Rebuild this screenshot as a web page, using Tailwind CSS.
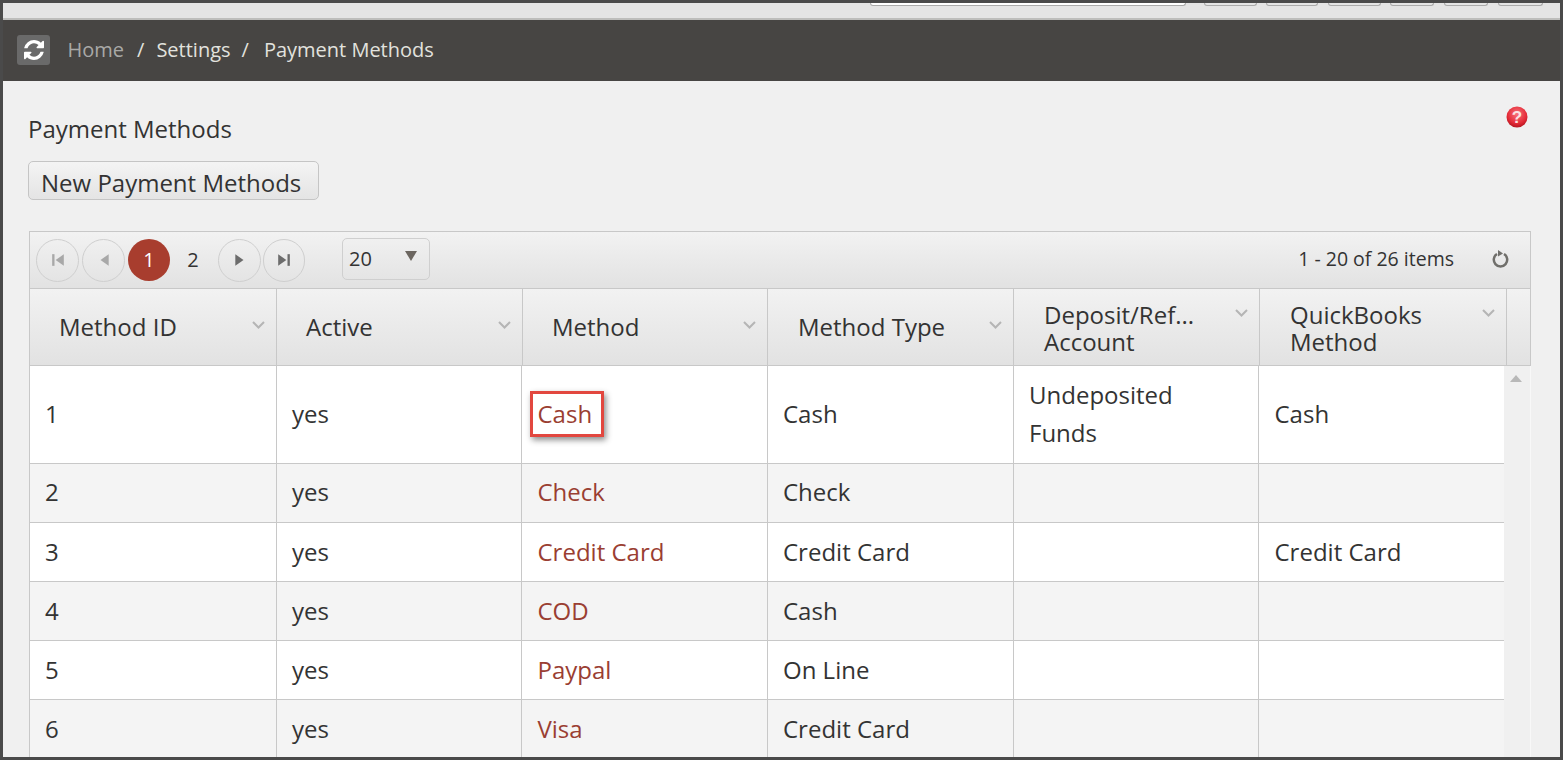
<!DOCTYPE html>
<html>
<head>
<meta charset="utf-8">
<script src="https://cdn.jsdelivr.net/npm/@tailwindcss/browser@4"></script>
</head>
<body class="m-0">
<div class="w-[1563px] h-[760px] box-border border-[3px] border-[#4a4a4a] overflow-hidden bg-[#f0f0f0] flex flex-col font-['Open_Sans',sans-serif] text-[#333]">
  <!-- top strip -->
  <div class="h-[17px] shrink-0 bg-[#e4e4e4] border-b-2 border-[#bdbdbb] flex items-start">
    <div class="ml-[867px] w-[316px] h-[3px] bg-white border border-t-0 border-[#aaa] rounded-b-sm"></div>
    <div class="ml-[18px] w-[53px] h-[3px] border border-t-0 border-[#aaa] rounded-b-sm"></div>
    <div class="ml-[9px] w-[52px] h-[3px] border border-t-0 border-[#aaa] rounded-b-sm"></div>
    <div class="ml-[10px] w-[53px] h-[3px] border border-t-0 border-[#aaa] rounded-b-sm"></div>
    <div class="ml-[9px] w-[44px] h-[3px] border border-t-0 border-[#aaa] rounded-b-sm"></div>
    <div class="ml-[10px] w-[44px] h-[3px] border border-t-0 border-[#aaa] rounded-b-sm"></div>
    <div class="ml-[10px] w-[45px] h-[3px] border border-t-0 border-[#aaa] rounded-b-sm"></div>
  </div>
  <!-- breadcrumb -->
  <div class="h-[61px] shrink-0 bg-[#474543] flex items-center pl-[14px] pb-[2px] text-[20px] text-[#e2e2de]">
    <div class="w-[33px] h-[30px] rounded-[3px] bg-[#6a6a6a] flex items-center justify-center">
      <svg class="w-[20px] h-[20px]" viewBox="0 0 1536 1536" fill="#fff"><path d="M1511 928q0 5-1 7-64 268-268 434.500t-478 166.500q-146 0-282.500-55t-243.500-157l-129 129q-19 19-45 19t-45-19-19-45v-448q0-26 19-45t45-19h448q26 0 45 19t19 45-19 45l-137 137q71 66 161 102t187 36q134 0 250-65t186-179q11-17 53-117 8-23 30-23h192q13 0 22.500 9.500t9.500 22.500zm25-800v448q0 26-19 45t-45 19h-448q-26 0-45-19t-19-45 19-45l138-138q-148-137-349-137-134 0-250 65t-186 179q-11 17-53 117-8 23-30 23h-199q-13 0-22.500-9.500t-9.500-22.500v-7q65-268 270-434.500t480-166.500q146 0 284 55.500t245 156.500l130-129q19-19 45-19t45 19 19 45z"/></svg>
    </div>
    <span class="ml-[17.500px] text-[#a9a9a7]">Home</span>
    <span class="ml-[13px]">/</span>
    <span class="ml-[12px]">Settings</span>
    <span class="ml-[11px]">/</span>
    <span class="ml-[15px]">Payment Methods</span>
  </div>
  <!-- content -->
  <div class="relative flex-1 min-h-0 pl-[25px] pr-[29px]">
    <svg class="absolute left-[1503px] top-[25px] w-[22px] h-[22px]" viewBox="0 0 22 22">
      <defs><radialGradient id="ball" cx="50%" cy="35%" r="65%"><stop offset="0" stop-color="#f8737c"/><stop offset="0.7" stop-color="#e42b37"/><stop offset="1" stop-color="#b5141f"/></radialGradient></defs>
      <circle cx="11" cy="11" r="10.500" fill="url(#ball)"/>
      <text x="11" y="17" text-anchor="middle" font-family="Liberation Sans" font-weight="700" font-size="17" fill="#fbe3e3">?</text>
    </svg>
    <h1 class="mt-[32px] text-[24px] leading-[32px] font-normal">Payment Methods</h1>
    <button class="mt-[16px] block w-[291px] h-[39px] box-border border border-[#c5c5c5] rounded-[5px] bg-gradient-to-b from-[#f4f4f4] to-[#e4e4e4] text-[24px] leading-[42px] text-left pl-[12px] text-[#333]">New Payment Methods</button>
    <!-- grid box -->
    <div class="mt-[31px] ml-px w-[1502px] box-border border border-[#c8c8c8] border-b-0 border-r-0 h-[540px] overflow-hidden">
      <!-- pager -->
      <div class="h-[56px] box-border border-r border-[#c8c8c8] bg-gradient-to-b from-[#f2f2f2] to-[#e2e2e2] flex items-center pl-[6px] pr-[21px] text-[20px]">
        <span class="w-[43px] h-[43px] box-border rounded-full border border-[#cfcfcf] flex items-center justify-center">
          <svg class="w-[14px] h-[14px]" viewBox="0 0 12 12" fill="#a8a8a8"><rect x="1" y="1" width="2" height="10"/><path d="M11 1v10L4 6z"/></svg>
        </span>
        <span class="ml-[3px] w-[43px] h-[43px] box-border rounded-full border border-[#cfcfcf] flex items-center justify-center">
          <svg class="w-[14px] h-[14px]" viewBox="0 0 12 12" fill="#a8a8a8"><path d="M10 1v10L3 6z"/></svg>
        </span>
        <span class="ml-[3px] w-[42px] h-[42px] rounded-full bg-[#a83d2e] text-white flex items-center justify-center">1</span>
        <span class="w-[46px] text-center">2</span>
        <span class="ml-[2px] w-[43px] h-[43px] box-border rounded-full border border-[#cfcfcf] flex items-center justify-center">
          <svg class="w-[14px] h-[14px]" viewBox="0 0 12 12" fill="#6c6c6c"><path d="M2 1v10l7-5z"/></svg>
        </span>
        <span class="ml-[2px] w-[42px] h-[43px] box-border rounded-full border border-[#cfcfcf] flex items-center justify-center">
          <svg class="w-[14px] h-[14px]" viewBox="0 0 12 12" fill="#6c6c6c"><path d="M1 1v10l7-5z"/><rect x="9" y="1" width="2" height="10"/></svg>
        </span>
        <div class="ml-[37px] mb-[2px] w-[88px] h-[42px] box-border border border-[#cfcfcf] rounded-[5px] flex items-center pl-[6px] relative">
          20
          <svg class="absolute right-[12px] top-[12px] w-[12px] h-[10px]" viewBox="0 0 12 10" fill="#6c6660"><path d="M0 0h12L6 10z"/></svg>
        </div>
        <span class="ml-auto text-[19.500px] pb-[2px]">1 - 20 of 26 items</span>
        <svg class="ml-[38px] mb-[3px] w-[17px] h-[19px]" viewBox="0 0 17 19" fill="none"><path d="M5 5a6.700 6.700 0 1 0 7 0" stroke="#706f6b" stroke-width="2.500"/><path d="M6 1l5 3.500-5 3z" fill="#706f6b"/></svg>
      </div>
      <!-- header -->
      <div class="h-[78px] box-border border-y border-r border-[#c8c8c8] bg-gradient-to-b from-[#f2f2f2] to-[#e2e2e2] grid grid-cols-[247px_246px_245px_246px_246px_247px_1fr] text-[24px] leading-[27px]">
        <div class="relative border-r border-[#c8c8c8] flex items-center pl-[29px] pb-px">Method ID<svg class="absolute right-[11px] top-[32px] w-[13px] h-[8px]" viewBox="0 0 13 8" fill="none" stroke="#b5b5b5" stroke-width="2"><path d="M1 1l5.500 5.500L12 1"/></svg></div>
        <div class="relative border-r border-[#c8c8c8] flex items-center pl-[29px] pb-px">Active<svg class="absolute right-[11px] top-[32px] w-[13px] h-[8px]" viewBox="0 0 13 8" fill="none" stroke="#b5b5b5" stroke-width="2"><path d="M1 1l5.500 5.500L12 1"/></svg></div>
        <div class="relative border-r border-[#c8c8c8] flex items-center pl-[29px] pb-px">Method<svg class="absolute right-[11px] top-[32px] w-[13px] h-[8px]" viewBox="0 0 13 8" fill="none" stroke="#b5b5b5" stroke-width="2"><path d="M1 1l5.500 5.500L12 1"/></svg></div>
        <div class="relative border-r border-[#c8c8c8] flex items-center pl-[30px] pb-px">Method Type<svg class="absolute right-[11px] top-[32px] w-[13px] h-[8px]" viewBox="0 0 13 8" fill="none" stroke="#b5b5b5" stroke-width="2"><path d="M1 1l5.500 5.500L12 1"/></svg></div>
        <div class="relative border-r border-[#c8c8c8] flex items-center pl-[30px] pt-[1px]">Deposit/Ref...<br>Account<svg class="absolute right-[11px] top-[20px] w-[13px] h-[8px]" viewBox="0 0 13 8" fill="none" stroke="#b5b5b5" stroke-width="2"><path d="M1 1l5.500 5.500L12 1"/></svg></div>
        <div class="relative border-r border-[#c8c8c8] flex items-center pl-[30px] pt-[1px]">QuickBooks<br>Method<svg class="absolute right-[11px] top-[20px] w-[13px] h-[8px]" viewBox="0 0 13 8" fill="none" stroke="#b5b5b5" stroke-width="2"><path d="M1 1l5.500 5.500L12 1"/></svg></div>
        <div></div>
      </div>
      <!-- body -->
      <div class="flex relative">
        <div class="w-[1474px] shrink-0 text-[24px] leading-[38px]">
          <div class="h-[98px] box-border border-b border-[#c8c8c8] bg-white grid grid-cols-[247px_245px_246px_246px_245px_1fr]">
            <div class="border-r border-[#c8c8c8] flex items-center pl-[15px] pb-[2px]">1</div>
            <div class="border-r border-[#c8c8c8] flex items-center pl-[15px] pb-[2px]">yes</div>
            <div class="border-r border-[#c8c8c8] flex items-center pl-[15.500px] pb-[2px]">
              <span class="relative text-[#9a3e32]">Cash<span class="absolute left-[-8px] top-[-4px] w-[74px] h-[46px] box-border border-[3px] border-[#e2473f] shadow-[2px_3px_6px_rgba(0,0,0,0.45)]"></span></span>
            </div>
            <div class="border-r border-[#c8c8c8] flex items-center pl-[15px] pb-[2px]">Cash</div>
            <div class="border-r border-[#c8c8c8] flex items-center pl-[15px] pb-[2px]">Undeposited<br>Funds</div>
            <div class="flex items-center pl-[15.500px] pb-[2px]">Cash</div>
          </div>
          <div class="h-[59px] box-border border-b border-[#c8c8c8] bg-[#f4f4f4] grid grid-cols-[247px_245px_246px_246px_245px_1fr]">
            <div class="border-r border-[#c8c8c8] flex items-center pl-[15px] pb-[3px]">2</div>
            <div class="border-r border-[#c8c8c8] flex items-center pl-[15px] pb-[3px]">yes</div>
            <div class="border-r border-[#c8c8c8] flex items-center pl-[15.500px] pb-[3px] text-[#9a3e32]">Check</div>
            <div class="border-r border-[#c8c8c8] flex items-center pl-[15px] pb-[3px]">Check</div>
            <div class="border-r border-[#c8c8c8]"></div>
            <div></div>
          </div>
          <div class="h-[59px] box-border border-b border-[#c8c8c8] bg-white grid grid-cols-[247px_245px_246px_246px_245px_1fr]">
            <div class="border-r border-[#c8c8c8] flex items-center pl-[15px]">3</div>
            <div class="border-r border-[#c8c8c8] flex items-center pl-[15px]">yes</div>
            <div class="border-r border-[#c8c8c8] flex items-center pl-[15.500px] text-[#9a3e32]">Credit Card</div>
            <div class="border-r border-[#c8c8c8] flex items-center pl-[15px]">Credit Card</div>
            <div class="border-r border-[#c8c8c8]"></div>
            <div class="flex items-center pl-[15.500px]">Credit Card</div>
          </div>
          <div class="h-[59px] box-border border-b border-[#c8c8c8] bg-[#f4f4f4] grid grid-cols-[247px_245px_246px_246px_245px_1fr]">
            <div class="border-r border-[#c8c8c8] flex items-center pl-[15px]">4</div>
            <div class="border-r border-[#c8c8c8] flex items-center pl-[15px]">yes</div>
            <div class="border-r border-[#c8c8c8] flex items-center pl-[15.500px] text-[#9a3e32]">COD</div>
            <div class="border-r border-[#c8c8c8] flex items-center pl-[15px]">Cash</div>
            <div class="border-r border-[#c8c8c8]"></div>
            <div></div>
          </div>
          <div class="h-[59px] box-border border-b border-[#c8c8c8] bg-white grid grid-cols-[247px_245px_246px_246px_245px_1fr]">
            <div class="border-r border-[#c8c8c8] flex items-center pl-[15px]">5</div>
            <div class="border-r border-[#c8c8c8] flex items-center pl-[15px]">yes</div>
            <div class="border-r border-[#c8c8c8] flex items-center pl-[15.500px] text-[#9a3e32]">Paypal</div>
            <div class="border-r border-[#c8c8c8] flex items-center pl-[15px]">On Line</div>
            <div class="border-r border-[#c8c8c8]"></div>
            <div></div>
          </div>
          <div class="h-[59px] box-border border-b border-[#c8c8c8] bg-[#f4f4f4] grid grid-cols-[247px_245px_246px_246px_245px_1fr]">
            <div class="border-r border-[#c8c8c8] flex items-center pl-[15px]">6</div>
            <div class="border-r border-[#c8c8c8] flex items-center pl-[15px]">yes</div>
            <div class="border-r border-[#c8c8c8] flex items-center pl-[15.500px] text-[#9a3e32]">Visa</div>
            <div class="border-r border-[#c8c8c8] flex items-center pl-[15px]">Credit Card</div>
            <div class="border-r border-[#c8c8c8]"></div>
            <div></div>
          </div>
        </div>
        <div class="flex-1 box-border border-r border-[#f8f8f8] bg-[#f0f0f0] flex justify-center pt-[9px]">
          <svg class="w-[12px] h-[7px] mr-[2px]" viewBox="0 0 12 7" fill="#b8b8b8"><path d="M0 7L6 0l6 7z"/></svg>
        </div>
      </div>
    </div>
  </div>
</div>
</body>
</html>
